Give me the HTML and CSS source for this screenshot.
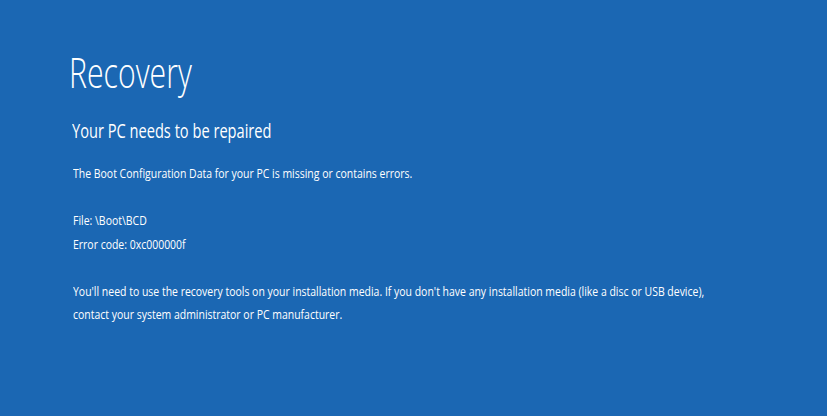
FILE: index.html
```html
<!DOCTYPE html>
<html>
<head>
<meta charset="utf-8">
<link rel="stylesheet" href="styles.css">
</head>
<body>
<main class="screen">
  <h1 class="title">Recovery</h1>
  <h2 class="subtitle">Your PC needs to be repaired</h2>
  <p class="text">The Boot Configuration Data for your PC is missing or contains errors.</p>
  <div class="details">
    <p class="text">File: \Boot\BCD</p>
    <p class="text">Error code: 0xc000000f</p>
  </div>
  <div class="advice">
    <p class="text">You'll need to use the recovery tools on your installation media. If you don't have any installation media (like a disc or USB device),</p>
    <p class="text">contact your system administrator or PC manufacturer.</p>
  </div>
</main>
</body>
</html>
```
FILE: styles.css
```css
html, body {
  margin: 0;
  padding: 0;
  background: #1b67b3;
}
.screen {
  width: 827px;
  height: 416px;
  box-sizing: border-box;
  padding: 46px 0 0 69px;
  color: #ffffff;
  font-family: "Open Sans", "Noto Sans", sans-serif;
  display: flex;
  flex-direction: column;
  align-items: flex-start;
}
.title {
  margin: 0;
  font-size: 42px;
  font-weight: 300;
  line-height: 52px;
  white-space: nowrap;
  transform: scaleX(0.72);
  transform-origin: left center;
}
.subtitle {
  margin: 20px 0 0 3px;
  font-size: 19.5px;
  font-weight: 400;
  line-height: 26px;
  white-space: nowrap;
  transform: scaleX(0.75);
  transform-origin: left center;
}
.text {
  margin: 0;
  font-size: 13px;
  line-height: 23.5px;
  white-space: nowrap;
  transform: scaleX(0.805);
  transform-origin: left center;
}
.subtitle + .text {
  margin: 18px 0 0 4px;
}
.details, .advice {
  margin: 23.5px 0 0 4px;
}
```
